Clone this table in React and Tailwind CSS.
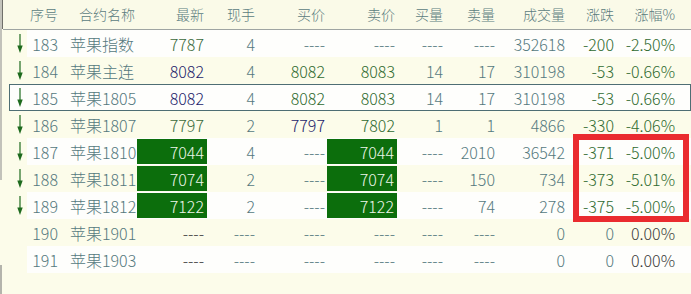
import React from "react";

const FONT = { fontFamily: '"Noto Sans CJK SC", "Noto Sans", sans-serif' };

const COLS = [
  { key: "no", w: "w-[35px] pr-[4px] justify-end", head: "序号" },
  { key: "name", w: "w-[75px] pl-[8px] justify-start", hw: "w-[75px] pr-[2px] justify-end", head: "合约名称" },
  { key: "last", w: "w-[70px] pr-[3px] justify-end", head: "最新" },
  { key: "vol", w: "w-[51px] pr-[3px] justify-end", head: "现手" },
  { key: "bid", w: "w-[69px] pr-[2px] justify-end", head: "买价" },
  { key: "ask", w: "w-[70px] pr-[2px] justify-end", head: "卖价" },
  { key: "bq", w: "w-[49px] pr-[3px] justify-end", head: "买量" },
  { key: "aq", w: "w-[52px] pr-[3px] justify-end", head: "卖量" },
  { key: "tv", w: "w-[70px] pr-[3px] justify-end", head: "成交量" },
  { key: "chg", w: "w-[49px] pr-[3px] justify-end", head: "涨跌" },
  { key: "pct", w: "w-[61px] pr-[3px] justify-end", head: "涨幅%" },
];

const T = "text-[#55797e]";
const G = "text-[#2f6a2f]";
const N = "text-[#1c1c6a]";
const D = "text-[#3a3a3a]";
const BOX = "box";

const rows = [
  { arrow: true, no: "183", name: "苹果指数", last: ["7787", "text-[#3b6a3b]"], vol: "4", bid: "----", ask: "----", bq: "----", aq: "----", tv: "352618", chg: ["-200", G], pct: ["-2.50%", G] },
  { arrow: true, no: "184", name: "苹果主连", last: ["8082", N], vol: "4", bid: ["8082", G], ask: ["8083", G], bq: "14", aq: "17", tv: "310198", chg: ["-53", G], pct: ["-0.66%", G] },
  { arrow: true, sel: true, no: "185", name: "苹果1805", last: ["8082", N], vol: "4", bid: ["8082", G], ask: ["8083", G], bq: "14", aq: "17", tv: "310198", chg: ["-53", G], pct: ["-0.66%", G] },
  { arrow: true, no: "186", name: "苹果1807", last: ["7797", "text-[#3b6a3b]"], vol: "2", bid: ["7797", N], ask: ["7802", G], bq: "1", aq: "1", tv: "4866", chg: ["-330", G], pct: ["-4.06%", G] },
  { arrow: true, no: "187", name: "苹果1810", last: ["7044", BOX], vol: "4", bid: "----", ask: ["7044", BOX], bq: "----", aq: "2010", tv: "36542", chg: ["-371", G], pct: ["-5.00%", G] },
  { arrow: true, no: "188", name: "苹果1811", last: ["7074", BOX], vol: "2", bid: "----", ask: ["7074", BOX], bq: "----", aq: "150", tv: "734", chg: ["-373", G], pct: ["-5.01%", G] },
  { arrow: true, no: "189", name: "苹果1812", last: ["7122", BOX], vol: "2", bid: "----", ask: ["7122", BOX], bq: "----", aq: "74", tv: "278", chg: ["-375", G], pct: ["-5.00%", G] },
  { arrow: false, no: "190", name: "苹果1901", last: ["----", D], vol: "----", bid: "----", ask: "----", bq: "----", aq: "----", tv: "0", chg: "0", pct: ["0.00%", D] },
  { arrow: false, no: "191", name: "苹果1903", last: ["----", D], vol: "----", bid: "----", ask: "----", bq: "----", aq: "----", tv: "0", chg: "0", pct: ["0.00%", D] },
];

function Arrow() {
  return (
    <svg width="6" height="19" viewBox="0 0 6 19">
      <line x1="3" y1="0" x2="3" y2="14" stroke="#1d6a1d" strokeWidth="1.2" />
      <polygon points="0.3,11.5 5.7,11.5 3,19" fill="#1d6a1d" />
    </svg>
  );
}

function Cell({ col, value }) {
  const [text, color] = Array.isArray(value) ? value : [value, T];
  if (color === BOX) {
    return (
      <div className={`flex h-[27px] ${col.w.replace(/p[rl]-\[\d+px\]/, "")}`}>
        <div className="flex items-center justify-end w-full h-[25px] mt-[1px] bg-[#0c6e0c] pr-[3px] text-[#eef6ea] whitespace-nowrap">
          {text}
        </div>
      </div>
    );
  }
  return <div className={`flex items-center h-[27px] whitespace-nowrap ${col.w} ${color}`}>{text}</div>;
}

function Row({ r, i }) {
  const white = i % 2 === 0;
  return (
    <div className="flex h-[27px]">
      <div className="w-[6px]" />
      <div className={r.sel ? "flex flex-1 bg-[#fefefc] shadow-[inset_0_0_0_1px_#4e6e74]" : "flex flex-1"}>
        <div className="w-[18px] h-[27px] flex items-center pl-[8px]">{r.arrow ? <Arrow /> : null}</div>
        <div className={!r.sel && white ? "flex flex-1 bg-[#fefefc]" : "flex flex-1"}>
          {COLS.map((c) => (
            <Cell key={c.key} col={c} value={r[c.key]} />
          ))}
        </div>
      </div>
    </div>
  );
}

export default function App() {
  return (
    <div className="relative w-[691px] h-[294px] overflow-hidden bg-[#fcfcea] flex text-[16px] font-light" style={FONT}>
      <div className="flex flex-col w-[3px] shrink-0">
        <div className="h-[29px] w-[3px] bg-[#c4c4bc] border-r border-[#6f6f6a]" />
        <div className="h-[151px] w-[2px] bg-[#c2c2ba]" />
        <div className="h-[85px]" />
        <div className="h-[29px] w-[2px] bg-[#b4b4ac]" />
      </div>
      <div className="flex flex-col flex-1">
        <div className="flex h-[30px] border-b border-[#9ea4a2] bg-[#fafae8] text-[14px] text-[#5a7c7e]">
          <div className="w-[24px]" />
          {COLS.map((c) => (
            <div key={c.key} className={`flex items-center whitespace-nowrap ${c.hw || c.w}`}>
              {c.head}
            </div>
          ))}
        </div>
        {rows.map((r, i) => (
          <Row key={r.no} r={r} i={i} />
        ))}
      </div>
      <div className="absolute left-[573px] top-[134px] w-[116px] h-[88px] border-[6px] border-[#ea2b2f]" />
    </div>
  );
}
